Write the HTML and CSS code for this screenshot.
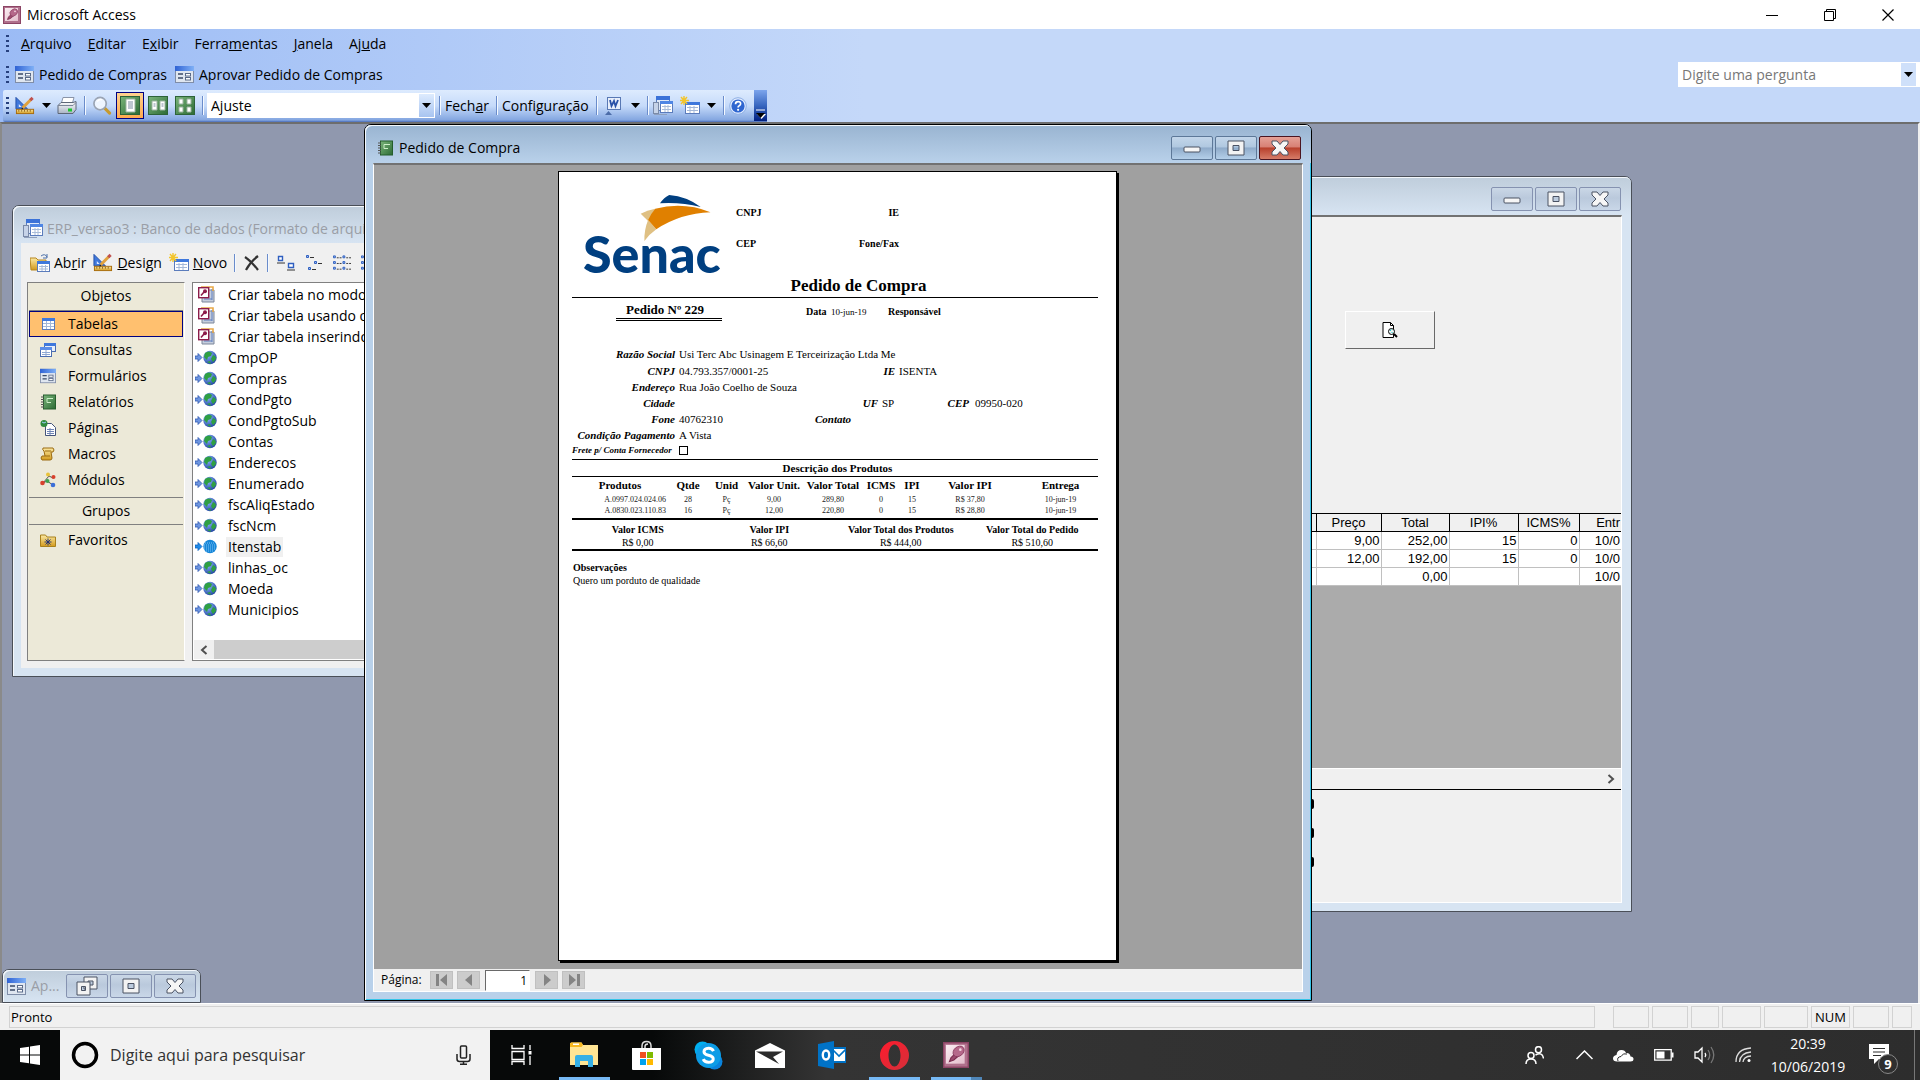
FILE: index.html
```html
<!DOCTYPE html>
<html lang="pt-BR">
<head>
<meta charset="utf-8">
<title>Microsoft Access</title>
<link rel="stylesheet" href="styles.css">
</head>
<body>
<svg class="defs" aria-hidden="true">
  <defs>
    <linearGradient id="gBlue" x1="0" y1="0" x2="1" y2="0"><stop offset="0" stop-color="#2f62d4"/><stop offset="1" stop-color="#7fb0f6"/></linearGradient>
    <linearGradient id="gGreen" x1="0" y1="0" x2="1" y2="1"><stop offset="0" stop-color="#7ab57a"/><stop offset="1" stop-color="#2c6a34"/></linearGradient>
    <linearGradient id="gGold" x1="0" y1="0" x2="0" y2="1"><stop offset="0" stop-color="#fbe9a4"/><stop offset="1" stop-color="#d39a1c"/></linearGradient>
    <linearGradient id="gGrey" x1="0" y1="0" x2="0" y2="1"><stop offset="0" stop-color="#fff"/><stop offset="1" stop-color="#a9b3c4"/></linearGradient>
    <linearGradient id="gOpera" x1="0" y1="0" x2="1" y2="1"><stop offset="0" stop-color="#ff1b2d"/><stop offset="1" stop-color="#d3303a"/></linearGradient>
    <radialGradient id="gGlobe" cx=".35" cy=".3" r=".8"><stop offset="0" stop-color="#8fb8ff"/><stop offset="1" stop-color="#1c3f9c"/></radialGradient>
    <linearGradient id="gKey" x1="0" y1="0" x2="1" y2="1"><stop offset="0" stop-color="#fbeef3"/><stop offset="1" stop-color="#e3bccb"/></linearGradient>
  </defs>
  <symbol id="access" viewBox="0 0 18 18"><rect x=".5" y=".5" width="17" height="17" fill="#b0708c" stroke="#8c4465"/><rect x="2" y="2" width="13" height="13" fill="url(#gKey)"/><path d="M4.500 13.500l1-2.500 4-4 2 2-4 3.500z" fill="#9c4a6e" stroke="#7c2c50" stroke-width=".8"/><ellipse cx="10.800" cy="6.500" rx="4.200" ry="3.200" fill="#b5688a" stroke="#8a3a60" stroke-width=".6" transform="rotate(-40 10.800 6.500)"/><circle cx="12" cy="5.300" r=".9" fill="#f3d6e1"/></symbol>
  <symbol id="form" viewBox="0 0 19 17"><rect x=".5" y=".5" width="18" height="16" fill="#dfe6f0" stroke="#7f8da8"/><rect x="0" y="0" width="19" height="5" fill="url(#gBlue)"/><path d="M3 8h5M3 12h5" stroke="#3b4a66" stroke-width="1.500"/><rect x="10.500" y="7.500" width="5" height="2.500" fill="#fff" stroke="#5a6a88"/><rect x="10.500" y="11.500" width="5" height="2.500" fill="#fff" stroke="#5a6a88"/></symbol>
  <symbol id="design" viewBox="0 0 21 19"><path d="M1 1v12h12z" fill="#3f78dc" stroke="#2250a8"/><path d="M4 8v3h3z" fill="#dce9ff"/><rect x="1.500" y="13.500" width="18" height="4.500" fill="url(#gGold)" stroke="#a86c0c"/><path d="M4 14v2M7 14v2M10 14v2M13 14v2M16 14v2" stroke="#7c4d05" stroke-width=".8"/><path d="M8 12l9-9" stroke="#e0a23e" stroke-width="3"/><path d="M16 4l2.500-2.500" stroke="#c0504d" stroke-width="3.200"/><path d="M7 13l1.500-.5" stroke="#222" stroke-width="1.500"/></symbol>
  <symbol id="printer" viewBox="0 0 20 18"><path d="M6 1h11l-2 7H4z" fill="#fff" stroke="#8a94a8"/><path d="M1 9l3-3h12l3-1v8l-3 4H1z" fill="url(#gGrey)" stroke="#5d6778"/><path d="M1 9h15l3-3" stroke="#7c8698" fill="none"/><rect x="11" y="12" width="4" height="3" fill="#1ec531"/></symbol>
  <symbol id="lens" viewBox="0 0 20 20"><path d="M12 12l6 6" stroke="#c79a2e" stroke-width="3.200" stroke-linecap="round"/><circle cx="8" cy="8" r="6.500" fill="#eef5ff" stroke="#9aa4b4" stroke-width="1.800"/><path d="M5 6q2-3 5-2" stroke="#fff" stroke-width="1.500" fill="none"/></symbol>
  <symbol id="page1" viewBox="0 0 20 19"><rect x=".5" y=".5" width="19" height="18" fill="url(#gGreen)" stroke="#2d6338"/><path d="M6 3h9v13H6z" fill="#fff" stroke="#9bb3a0"/><path d="M8 6h5M8 8h5M8 10h5M8 12h5" stroke="#7b8b9f"/></symbol>
  <symbol id="page2" viewBox="0 0 20 19"><rect x=".5" y=".5" width="19" height="18" fill="url(#gGreen)" stroke="#2d6338"/><path d="M4 5h5v9H4zM12 5h5v9h-5z" fill="#fff" stroke="#9bb3a0"/><path d="M5.500 8h2M5.500 10h2M13.500 8h2M13.500 10h2" stroke="#7b8b9f"/></symbol>
  <symbol id="page4" viewBox="0 0 20 19"><rect x=".5" y=".5" width="19" height="18" fill="url(#gGreen)" stroke="#2d6338"/><path d="M4 3h4v5H4zM12 3h4v5h-4zM4 11h4v5H4zM12 11h4v5h-4z" fill="#fff" stroke="#9bb3a0"/></symbol>
  <symbol id="down" viewBox="0 0 9 5"><path d="M0 0h9L4.500 5z" fill="#000"/></symbol>
  <symbol id="word" viewBox="0 0 16 18"><rect x="2.500" y=".5" width="13" height="12" fill="#e8effb" stroke="#5878b4"/><path d="M5 3l1.500 6L9 4l1.500 5L13 3" fill="none" stroke="#2a52a8" stroke-width="1.800"/><path d="M0 18l3.500-4L7 18z" fill="#4c6ca8"/></symbol>
  <symbol id="dbwin" viewBox="0 0 20 19"><path d="M1 7h5v11h8v1H1z" fill="#8fa0bd"/><rect x="3.500" y=".5" width="13" height="14" fill="#dde8f8" stroke="#5b7cbc"/><rect x="3" y="0" width="14" height="4" fill="#3b72d8"/><rect x=".5" y="6.500" width="5" height="11" fill="#c6d3e8" stroke="#7a8aa8"/><rect x="7.500" y="5.500" width="12" height="11" fill="#fff" stroke="#5b7cbc"/><rect x="7" y="5" width="13" height="3" fill="#4f86e4"/><path d="M9 10.500h9M9 13.500h9M12 9v7M15 9v7" stroke="#aabdd9"/></symbol>
  <symbol id="newobj" viewBox="0 0 20 19"><rect x="5.500" y="6.500" width="14" height="11" fill="#fff" stroke="#5b7cbc"/><rect x="5" y="6" width="15" height="3" fill="#3f78dc"/><path d="M7 11.500h11M7 14.500h11M10 10v7M14 10v7" stroke="#a4b8d8"/><path d="M4 0v9M0 4.500h9M1 1l6 7M7 1L1 8" stroke="#f3c52c" stroke-width="1.400"/></symbol>
  <symbol id="help" viewBox="0 0 18 18"><circle cx="9" cy="9" r="8.300" fill="#dfeaff" stroke="#8fb0e4"/><circle cx="9" cy="9" r="6.600" fill="#2f66d0"/><path d="M6.500 7.200q0-2.600 2.600-2.600t2.500 2.200q0 1.300-1.400 2-1.100.5-1.100 1.600" fill="none" stroke="#fff" stroke-width="1.700"/><circle cx="9.100" cy="12.800" r="1.100" fill="#fff"/></symbol>
  <symbol id="book" viewBox="0 0 16 16"><rect x="3.500" y="1" width="12" height="14" fill="url(#gGreen)" stroke="#255e2c"/><path d="M1 3h3M1 5.500h3M1 8h3M1 10.500h3M1 13h3" stroke="#555"/><path d="M7 4.500h6M7 4.500v4h4" fill="none" stroke="#cdf0c9"/></symbol>
  <symbol id="folder" viewBox="0 0 20 19"><path d="M0 5h6l2 2h8v10H1z" fill="url(#gGold)" stroke="#b8871f"/><path d="M11 3q4-3 6 1M17 1v4h-4" fill="none" stroke="#4a6ea8"/><rect x="7.500" y="8.500" width="12" height="10" fill="#fff" stroke="#5b7cbc"/><rect x="7" y="8" width="13" height="3" fill="#3f78dc"/><path d="M9 13.500h9M9 16h9M12 12v6M15.500 12v6" stroke="#a4b8d8"/></symbol>
  <symbol id="del" viewBox="0 0 16 16"><path d="M1 2q6 4 13 13M14 1Q6 7 2 15" stroke="#333" stroke-width="2.200" fill="none"/></symbol>
  <symbol id="large" viewBox="0 0 18 16"><path d="M1.500 1.500h4v4h-4zM11.500 8.500h5v4h-5z" fill="#fff" stroke="#2f5fc0" stroke-width="1.400"/><path d="M0 8h8M10 15h8" stroke="#333"/></symbol>
  <symbol id="small" viewBox="0 0 18 16"><path d="M1.500 .5h2v2h-2zM9.500 6.500h2v2h-2zM3.500 12.500h2v2h-2z" fill="#9bbcf0" stroke="#2f5fc0"/><path d="M5 2.500h4M13 8.500h4M7 14.500h4" stroke="#333"/></symbol>
  <symbol id="details" viewBox="0 0 19 16"><path d="M.5 .5h2v2h-2zM10.500 .5h2v2h-2zM.5 6.500h2v2h-2zM10.500 6.500h2v2h-2zM.5 12.500h2v2h-2zM10.500 12.500h2v2h-2z" fill="#9bbcf0" stroke="#2f5fc0"/><path d="M4 2.500h5M14 2.500h5M4 8.500h5M14 8.500h5M4 14.500h5M14 14.500h5" stroke="#333" stroke-dasharray="2 1"/></symbol>
  <symbol id="table" viewBox="0 0 16 16"><rect x="2.500" y="2.500" width="12" height="11" fill="#fff" stroke="#5b7cbc"/><rect x="2" y="2" width="13" height="3" fill="#3f78dc"/><path d="M3 7.500h11M3 10.500h11M6.500 5v8M10.500 5v8" stroke="#a4b8d8"/></symbol>
  <symbol id="query" viewBox="0 0 16 16"><rect x="4.500" y="1.500" width="11" height="8" fill="#e8effb" stroke="#4a6cb0"/><rect x="4" y="1" width="12" height="3" fill="#3f78dc"/><rect x=".5" y="5.500" width="11" height="9" fill="#fff" stroke="#4a6cb0"/><rect x="0" y="5" width="12" height="3" fill="#5a8de8"/><path d="M2 10.500h8M2 12.500h8M6 8v6" stroke="#8ea8d4"/></symbol>
  <symbol id="pages" viewBox="0 0 16 16"><path d="M5.500 3.500h6l4 4v8h-10z" fill="#fff" stroke="#44547a"/><path d="M7 9.500h7M7 11.500h7M7 13.500h7M10 8v7" stroke="#6f84b4"/><circle cx="4" cy="3.500" r="3.500" fill="#2f8a3e"/><path d="M2 2q2 2 4 0" stroke="#9fd0ff" fill="none"/></symbol>
  <symbol id="macro" viewBox="0 0 16 16"><path d="M3 2h10q2 2 0 4h-2l1 6q0 2-2 2H2q-2-2 0-4h3L4 5Q2 4 3 2z" fill="url(#gGold)" stroke="#9a6a10"/><path d="M5 5h6M5 10h5" stroke="#9a6a10"/></symbol>
  <symbol id="module" viewBox="0 0 16 16"><path d="M3 11l6-7M3 11l4-2 6 4M9 4l4 2" stroke="#555" fill="none"/><circle cx="8" cy="2.500" r="2" fill="#e8c23a"/><circle cx="13.500" cy="5" r="2" fill="#d8402c"/><circle cx="2.500" cy="11" r="2.300" fill="#d8402c"/><circle cx="7.500" cy="9" r="2" fill="#3da24c"/><circle cx="13" cy="13" r="2.300" fill="#3c6fd8"/></symbol>
  <symbol id="fav" viewBox="0 0 16 14"><path d="M.5 2h5l1.500 2h8.500v9.500H.5z" fill="url(#gGold)" stroke="#a8801c"/><path d="M8 5.500v7M4.500 9h7M5.500 6.500l5 5M10.500 6.500l-5 5" stroke="#1c2c74" stroke-width=".9"/></symbol>
  <symbol id="wizard" viewBox="0 0 17 17"><path d="M4 4h12v12H4z" fill="#c5cedd" stroke="#7c879a"/><path d="M6 13h8M14 3v11" stroke="#5f7fc0" fill="none"/><path d="M3 1h12v4" stroke="#e8a848" stroke-width="1.600" fill="none"/><rect x=".7" y="1.700" width="10" height="10" fill="#fff" stroke="#8c1c4a" stroke-width="1.400"/><path d="M3 9.500l3-3.500" stroke="#8c1c4a" stroke-width="1.600"/><circle cx="7" cy="5.300" r="2" fill="#8c1c4a"/></symbol>
  <symbol id="globe" viewBox="0 0 22 15"><path d="M0 6h3V3.500L7 7.500 3 11.500V9H0z" fill="#6d95e0" stroke="#3058b0" stroke-width=".8"/><circle cx="15" cy="7.500" r="6.700" fill="url(#gGlobe)"/><path d="M10 3q4-3 7 0l-1 3-3 1-1 3-3-3zM18 5q3 1 3 4l-3 3-2-3zM12 12l3-1 1 3z" fill="#2fa043"/></symbol>
  <symbol id="globesel" viewBox="0 0 22 15"><path d="M0 6h3V3.500L7 7.500 3 11.500V9H0z" fill="#1f8be8" stroke="#0d62c0" stroke-width=".8"/><circle cx="15" cy="7.500" r="6.700" fill="#1686d8"/><path d="M10 4h10M9 6h12M9 8h12M9 10h12M11 12h8" stroke="#7cc2f4" stroke-dasharray="1 1"/></symbol>
  <symbol id="wmin" viewBox="0 0 18 16"><rect x="1" y="7" width="16" height="5" rx="1" fill="#f6f6f6" stroke="#4a5263"/></symbol>
  <symbol id="wmax" viewBox="0 0 18 16"><path fill-rule="evenodd" d="M1 1h16v14H1zM6 5.500h6v5H6z" fill="#f3f3f3" stroke="#4a5263" stroke-linejoin="round"/></symbol>
  <symbol id="wres" viewBox="0 0 22 20"><path fill-rule="evenodd" d="M8 1h13v12H8zM12 5h5v4h-5z" fill="#f3f3f3" stroke="#4a5263"/><path fill-rule="evenodd" d="M1 6h13v13H1zM5.500 10.500h4v4h-4z" fill="#f3f3f3" stroke="#4a5263"/></symbol>
  <symbol id="wclose" viewBox="0 0 18 16"><path d="M1 1h5l3 3.500L12 1h5v3l-4 4 4 4v3h-5L9 11.500 6 15H1v-3l4-4-4-4z" fill="#f6f6f6" stroke="#4a5263" stroke-linejoin="round"/></symbol>
</svg>

<header class="titlebar">
  <svg class="i18"><use href="#access"/></svg>
  <h1 class="app-name">Microsoft Access</h1>
  <div class="caption">
    <button class="cap-btn" aria-label="Minimizar"><svg width="12" height="12"><path d="M0 6.500h12" stroke="#000"/></svg></button>
    <button class="cap-btn" aria-label="Restaurar"><svg width="12" height="12" fill="none" stroke="#000"><path d="M.5 2.500h9v9h-9zM2.500 2.500v-2h9v9h-2"/></svg></button>
    <button class="cap-btn" aria-label="Fechar"><svg width="12" height="12"><path d="M.5 .5l11 11M11.500 .5l-11 11" stroke="#000" stroke-width="1.200"/></svg></button>
  </div>
</header>

<div class="bars">
  <nav class="menu bar">
    <span class="grip"></span>
    <button class="menu-item"><u>A</u>rquivo</button><button class="menu-item"><u>E</u>ditar</button><button class="menu-item">E<u>x</u>ibir</button><button class="menu-item">Ferra<u>m</u>entas</button><button class="menu-item"><u>J</u>anela</button><button class="menu-item">Aj<u>u</u>da</button>
  </nav>
  <div class="bar second">
    <span class="grip"></span>
    <button class="link-btn"><svg class="i19"><use href="#form"/></svg>Pedido de Compras</button>
    <button class="link-btn"><svg class="i19"><use href="#form"/></svg>Aprovar Pedido de Compras</button>
    <div class="ask"><input type="text" value="Digite uma pergunta" aria-label="Digite uma pergunta"><button aria-label="Abrir lista"><svg class="arr"><use href="#down"/></svg></button></div>
  </div>
  <div class="bar tools">
    <span class="grip"></span>
    <button class="tool" aria-label="Design"><svg class="i20"><use href="#design"/></svg></button>
    <button class="tool drop" aria-label="Opções de design"><svg class="arr"><use href="#down"/></svg></button>
    <button class="tool" aria-label="Imprimir"><svg class="i20"><use href="#printer"/></svg></button>
    <span class="sep"></span>
    <button class="tool" aria-label="Zoom"><svg class="i20"><use href="#lens"/></svg></button>
    <button class="tool on" aria-label="Uma página"><svg class="i20"><use href="#page1"/></svg></button>
    <button class="tool wide" aria-label="Duas páginas"><svg class="i20"><use href="#page2"/></svg></button>
    <button class="tool wide" aria-label="Várias páginas"><svg class="i20"><use href="#page4"/></svg></button>
    <span class="sep"></span>
    <div class="combo"><select aria-label="Zoom"><option>Ajuste</option></select><span class="combo-arrow"><svg class="arr"><use href="#down"/></svg></span></div>
    <span class="sep tight"></span>
    <button class="tool label">Fech<u>a</u>r</button>
    <span class="sep"></span>
    <button class="tool label">Confi<u>g</u>uração</button>
    <span class="sep"></span>
    <button class="tool" aria-label="Vínculos do Office"><svg class="i18"><use href="#word"/></svg></button>
    <button class="tool drop far" aria-label="Opções de vínculo"><svg class="arr"><use href="#down"/></svg></button>
    <span class="sep"></span>
    <button class="tool label" aria-label="Janela de banco de dados"><svg class="i20"><use href="#dbwin"/></svg></button>
    <button class="tool wide" aria-label="Novo objeto"><svg class="i20"><use href="#newobj"/></svg></button>
    <button class="tool drop" aria-label="Opções de novo objeto"><svg class="arr"><use href="#down"/></svg></button>
    <span class="sep"></span>
    <button class="tool label" aria-label="Ajuda"><svg class="i18"><use href="#help"/></svg></button>
    <button class="overflow" aria-label="Opções da barra"><svg width="11" height="11"><path d="M1 1h9" stroke="#fff" stroke-width="1"/><path d="M2 5h9L6.500 10z" fill="#fff"/><path d="M1 4h9L5.500 9z" fill="#000"/></svg></button>
  </div>
</div>

<main class="mdi">
  <section class="win db">
    <header class="win-title"><svg class="i20"><use href="#dbwin"/></svg><h2>ERP_versao3 : Banco de dados (Formato de arquivo do Access 2000)</h2></header>
    <div class="db-body">
      <div class="db-tools">
        <button><svg class="i20"><use href="#folder"/></svg><span>Ab<u>r</u>ir</span></button>
        <button><svg class="i20"><use href="#design"/></svg><span><u>D</u>esign</span></button>
        <button><svg class="i20"><use href="#newobj"/></svg><span><u>N</u>ovo</span></button>
        <span class="sep"></span>
        <button aria-label="Excluir"><svg class="i16"><use href="#del"/></svg></button>
        <span class="sep"></span>
        <button class="view" aria-label="Ícones grandes"><svg class="i18"><use href="#large"/></svg></button>
        <button class="view" aria-label="Ícones pequenos"><svg class="i18"><use href="#small"/></svg></button>
        <button class="view" aria-label="Lista"><svg class="i18"><use href="#details"/></svg></button>
        <button class="view" aria-label="Detalhes"><svg class="i18"><use href="#details"/></svg></button>
      </div>
      <div class="db-panes">
        <nav class="objects">
          <h3>Objetos</h3>
          <button class="obj sel"><svg class="i16"><use href="#table"/></svg>Tabelas</button>
          <button class="obj"><svg class="i16"><use href="#query"/></svg>Consultas</button>
          <button class="obj"><svg class="i16"><use href="#form"/></svg>Formulários</button>
          <button class="obj"><svg class="i16"><use href="#book"/></svg>Relatórios</button>
          <button class="obj"><svg class="i16"><use href="#pages"/></svg>Páginas</button>
          <button class="obj"><svg class="i16"><use href="#macro"/></svg>Macros</button>
          <button class="obj"><svg class="i16"><use href="#module"/></svg>Módulos</button>
          <h3 class="groups">Grupos</h3>
          <button class="obj"><svg class="i16"><use href="#fav"/></svg>Favoritos</button>
        </nav>
        <div class="list">
          <ul>
            <li><svg class="wiz"><use href="#wizard"/></svg><span>Criar tabela no modo Design</span></li>
            <li><svg class="wiz"><use href="#wizard"/></svg><span>Criar tabela usando o assistente</span></li>
            <li><svg class="wiz"><use href="#wizard"/></svg><span>Criar tabela inserindo dados</span></li>
            <li><svg class="glb"><use href="#globe"/></svg><span>CmpOP</span></li>
            <li><svg class="glb"><use href="#globe"/></svg><span>Compras</span></li>
            <li><svg class="glb"><use href="#globe"/></svg><span>CondPgto</span></li>
            <li><svg class="glb"><use href="#globe"/></svg><span>CondPgtoSub</span></li>
            <li><svg class="glb"><use href="#globe"/></svg><span>Contas</span></li>
            <li><svg class="glb"><use href="#globe"/></svg><span>Enderecos</span></li>
            <li><svg class="glb"><use href="#globe"/></svg><span>Enumerado</span></li>
            <li><svg class="glb"><use href="#globe"/></svg><span>fscAliqEstado</span></li>
            <li><svg class="glb"><use href="#globe"/></svg><span>fscNcm</span></li>
            <li class="picked"><svg class="glb"><use href="#globesel"/></svg><span>Itenstab</span></li>
            <li><svg class="glb"><use href="#globe"/></svg><span>linhas_oc</span></li>
            <li><svg class="glb"><use href="#globe"/></svg><span>Moeda</span></li>
            <li><svg class="glb"><use href="#globe"/></svg><span>Municipios</span></li>
          </ul>
          <div class="hscroll"><button aria-label="Rolar para a esquerda"><svg width="8" height="10"><path d="M6.500 1L2 5l4.500 4" fill="none" stroke="#505050" stroke-width="2"/></svg></button><span class="thumb"></span></div>
        </div>
      </div>
    </div>
  </section>

  <section class="win order">
    <header class="win-title">
      <div class="win-btns"><button aria-label="Minimizar"><svg class="g"><use href="#wmin"/></svg></button><button aria-label="Maximizar"><svg class="g"><use href="#wmax"/></svg></button><button aria-label="Fechar"><svg class="g"><use href="#wclose"/></svg></button></div>
    </header>
    <div class="win-body">
      <div class="order-form"><button class="preview" aria-label="Visualizar impressão"><svg width="16" height="16"><path d="M1 .5h7.500l3 3V15.500H1z" fill="#fff" stroke="#000"/><path d="M8.500 .5v3h3" fill="none" stroke="#000"/><circle cx="9.500" cy="9.500" r="3" fill="#e8f4f4" stroke="#000"/><path d="M8 9l1.500-1.500M9.500 11l1-1" stroke="#2cc"/><path d="M12 12l3 3" stroke="#000" stroke-width="2"/></svg></button></div>
      <div class="sheet">
        <table>
          <colgroup><col><col class="c65"><col class="c68"><col class="c69"><col class="c61"><col class="c42"></colgroup>
          <thead><tr><th></th><th>Preço</th><th>Total</th><th>IPI%</th><th>ICMS%</th><th class="last">Entr</th></tr></thead>
          <tbody>
            <tr><td></td><td>9,00</td><td>252,00</td><td>15</td><td>0</td><td class="last">10/0</td></tr>
            <tr><td></td><td>12,00</td><td>192,00</td><td>15</td><td>0</td><td class="last">10/0</td></tr>
            <tr><td></td><td></td><td>0,00</td><td></td><td></td><td class="last">10/0</td></tr>
          </tbody>
        </table>
      </div>
      <div class="sheet-scroll"><button aria-label="Rolar para a direita"><svg width="8" height="10"><path d="M1.500 1L6 5 1.500 9" fill="none" stroke="#505050" stroke-width="2"/></svg></button></div>
      <div class="marks"><i></i><i></i><i></i></div>
    </div>
  </section>

  <section class="win report">
    <header class="win-title"><svg class="i16"><use href="#book"/></svg><h2>Pedido de Compra</h2>
      <div class="win-btns"><button aria-label="Minimizar"><svg class="g"><use href="#wmin"/></svg></button><button aria-label="Maximizar"><svg class="g"><use href="#wmax"/></svg></button><button class="close" aria-label="Fechar"><svg class="g"><use href="#wclose"/></svg></button></div>
    </header>
    <div class="win-body">
      <div class="viewer">
        <article class="paper">
          <div class="letterhead">
            <svg class="logo" viewBox="0 0 138 80" role="img" aria-label="Senac">
              <path d="M75 8.300Q79 2.500 84.200 0 102 1.500 115.700 12 96 7 75 8.300z" fill="#003f80"/>
              <path d="M55.700 18.700Q62 15 70.200 13.700L63.100 26z" fill="#dfc083"/>
              <path d="M63.100 25L71.300 34.300Q64 39.500 59.400 46 59 35 63.100 25z" fill="#dfc083"/>
              <path d="M70.200 13.700Q99 6.500 125.500 17.300 95 18.500 71.300 34.300L63.100 25Q66 18.500 70.200 13.700z" fill="#e08000"/>
              <text x="-2" y="78" class="wordmark">Senac</text>
            </svg>
            <div class="lh-fields"><b>CNPJ</b><b class="r">IE</b><b>CEP</b><b class="r">Fone/Fax</b></div>
          </div>
          <h2 class="doc-title">Pedido de Compra</h2>
          <div class="doc-head"><div class="doc-no">Pedido Nº 229</div><b class="dt">Data</b><span class="dv">10-jun-19</span><b>Responsável</b></div>
          <div class="details">
            <b class="k">Razão Social</b><span class="all">Usi Terc Abc Usinagem E Terceirização Ltda Me</span>
            <b class="k">CNPJ</b><span>04.793.357/0001-25</span><b class="ie">IE</b><span class="iev">ISENTA</span>
            <b class="k">Endereço</b><span class="all">Rua João Coelho de Souza</span>
            <b class="k">Cidade</b><span></span><b>UF</b><span>SP</span><b>CEP</b><span class="zip">09950-020</span>
            <b class="k">Fone</b><span class="phone">40762310<b>Contato</b></span>
            <b class="k">Condição Pagamento</b><span class="all">A Vista</span>
            <label for="frete">Frete p/ Conta Fornecedor</label><input type="checkbox" id="frete">
          </div>
          <h3 class="prod-title">Descrição dos Produtos</h3>
          <table class="prod">
            <colgroup><col class="p1"><col class="p2"><col class="p3"><col class="p4"><col class="p5"><col class="p6"><col class="p7"><col class="p8"><col></colgroup>
            <thead><tr><th>Produtos</th><th>Qtde</th><th>Unid</th><th>Valor Unit.</th><th>Valor Total</th><th>ICMS</th><th>IPI</th><th>Valor IPI</th><th>Entrega</th></tr></thead>
            <tbody>
              <tr><td>A.0997.024.024.06</td><td>28</td><td>Pç</td><td>9,00</td><td>289,80</td><td>0</td><td>15</td><td>R$ 37,80</td><td>10-jun-19</td></tr>
              <tr><td>A.0830.023.110.83</td><td>16</td><td>Pç</td><td>12,00</td><td>220,80</td><td>0</td><td>15</td><td>R$ 28,80</td><td>10-jun-19</td></tr>
            </tbody>
          </table>
          <dl class="totals">
            <div><dt>Valor ICMS</dt><dd>R$ 0,00</dd></div>
            <div><dt>Valor IPI</dt><dd>R$ 66,60</dd></div>
            <div><dt>Valor Total dos Produtos</dt><dd>R$ 444,00</dd></div>
            <div><dt>Valor Total do Pedido</dt><dd>R$ 510,60</dd></div>
          </dl>
          <div class="notes"><b>Observações</b><p>Quero um porduto de qualidade</p></div>
        </article>
      </div>
      <div class="pager">
        <label for="pg">Página:</label>
        <button aria-label="Primeira página"><svg width="12" height="12" fill="#848484"><path d="M0 0h3v12H0zM11 0v12L4 6z"/></svg></button>
        <button aria-label="Página anterior"><svg width="12" height="12" fill="#848484"><path d="M9 0v12L2 6z"/></svg></button>
        <input id="pg" type="text" value="1">
        <button aria-label="Próxima página"><svg width="12" height="12" fill="#848484"><path d="M3 0v12l7-6z"/></svg></button>
        <button aria-label="Última página"><svg width="12" height="12" fill="#848484"><path d="M9 0h3v12H9zM1 0v12l7-6z"/></svg></button>
      </div>
    </div>
  </section>

  <section class="win mini">
    <header class="win-title"><svg class="i19"><use href="#form"/></svg><h2>Ap...</h2>
      <div class="win-btns"><button aria-label="Restaurar"><svg class="g big"><use href="#wres"/></svg></button><button aria-label="Maximizar"><svg class="g"><use href="#wmax"/></svg></button><button aria-label="Fechar"><svg class="g"><use href="#wclose"/></svg></button></div>
    </header>
  </section>
</main>

<div class="status">
  <span class="pane msg">Pronto</span>
  <span class="pane w36 first"></span><span class="pane w36"></span><span class="pane w28"></span><span class="pane w38"></span><span class="pane w44"></span><span class="pane w38">NUM</span><span class="pane w36"></span><span class="pane w20"></span>
</div>

<footer class="taskbar">
  <button class="start" aria-label="Iniciar"><svg width="20" height="20" fill="#fff"><path d="M0 3l9-1.300V9.500H0zM10 1.500L20 0v9.500H10zM0 10.500h9v7.800L0 17zM10 10.500h10V20l-10-1.500z"/></svg></button>
  <div class="search">
    <svg width="28" height="28"><circle cx="14" cy="14" r="11.500" fill="none" stroke="#000" stroke-width="3.500"/></svg>
    <input type="text" value="Digite aqui para pesquisar" aria-label="Pesquisar">
    <svg width="15" height="20" fill="none" stroke="#222" stroke-width="1.500"><rect x="4.500" y="1" width="6" height="12" rx="1"/><path d="M1 9v5q0 2.500 2.500 2.500h8q2.500 0 2.500-2.500V9M7.500 16.500v3M4 19.200h7"/></svg>
  </div>
  <nav class="apps">
    <button aria-label="Visão de tarefas"><svg width="22" height="20" fill="none" stroke="#fff" stroke-width="1.300"><path d="M1 0v3.500h12V0M1 6.500h12v8H1zM1 20v-3.500h12V20M19 0v5M19 11v9"/><path d="M17.500 6h3v3.500h-3z" fill="#fff" stroke="none"/></svg></button>
    <button class="run" aria-label="Explorador"><svg width="28" height="26"><path d="M0 2q0-1.500 1.500-1.500h10L13 3h15v20H0z" fill="#ffe594"/><path d="M0 2q0-1.500 1.500-1.500h10L13 3l-1.500 2H0z" fill="#f6b820"/><path d="M3 1.500h6v1.500H3z" fill="#fff"/><path d="M5 25V15q0-2 2-2h14q2 0 2 2v10h-5v-6h-8v6z" fill="#36b0e6"/></svg></button>
    <button aria-label="Loja"><svg width="29" height="30"><path d="M10 9V6q0-4.500 4.500-4.500T19 6v3M13 9V6.500Q13 4 16 4" fill="none" stroke="#ddd" stroke-width="1.500"/><path d="M0 8h29v21q0 1-1 1H1q-1 0-1-1z" fill="#fff"/><path d="M8 12h6v6H8z" fill="#f05022"/><path d="M15 12h6v6h-6z" fill="#7fba00"/><path d="M8 19h6v6H8z" fill="#00a2ee"/><path d="M15 19h6v6h-6z" fill="#ffb900"/></svg></button>
    <button aria-label="Skype"><svg width="29" height="29"><circle cx="8.500" cy="8.500" r="8" fill="#00aff0"/><circle cx="20.500" cy="20.500" r="8" fill="#0a83dc"/><circle cx="14.500" cy="14.500" r="12.500" fill="#0c9ce6"/><path d="M19.500 10.200Q18 7.200 14.500 7.300 10 7.500 10 10.800q0 2.500 4.500 3.500 4.700 1 4.700 3.600 0 3.200-4.700 3.300-4 0-5.300-3" fill="none" stroke="#fff" stroke-width="3"/></svg></button>
    <button aria-label="Email"><svg width="30" height="25"><path d="M0 7.500L15 0l15 7.500V25H0z" fill="#fff"/><path d="M1 8.500h27L18 14l6 7z" fill="#2b2b2b"/></svg></button>
    <button aria-label="Outlook"><svg width="28" height="28"><path d="M13 6h15v16H13z" fill="#0072c6"/><path d="M15 8h12v12H15z" fill="#fff"/><path d="M15 9l6 6 6.500-6.500" fill="none" stroke="#0072c6" stroke-width="1.600"/><path d="M0 3l16-3v28L0 25z" fill="#0072c6"/><ellipse cx="8" cy="14" rx="3.200" ry="4.500" fill="none" stroke="#fff" stroke-width="2.400"/></svg></button>
    <button class="run" aria-label="Opera"><svg width="29" height="29"><path fill-rule="evenodd" d="M14.500 0a14.500 14.500 0 1 0 0 29 14.500 14.500 0 0 0 0-29zm0 3.500c3.500 0 6 5 6 11s-2.500 11-6 11-6-5-6-11 2.500-11 6-11z" fill="url(#gOpera)"/></svg></button>
    <button class="run multi" aria-label="Access"><svg width="26" height="26"><use href="#access"/></svg></button>
  </nav>
  <div class="tray">
    <svg width="19" height="19" fill="none" stroke="#fff" stroke-width="1.500"><circle cx="6" cy="9.500" r="3"/><circle cx="13.500" cy="3.700" r="3"/><path d="M1 18q0-5 5-5t5 5M10.500 9q7-3.500 8 3.500"/></svg>
    <svg width="17" height="10"><path d="M.5 9l8-8 8 8" fill="none" stroke="#fff" stroke-width="1.500"/></svg>
    <svg width="21" height="13"><path d="M4 12.500q-4 0-4-3t3.500-3.500Q4 1 8.500 1q3.500 0 4.500 3 4-.5 4.500 3.500 3 .2 3 2.500 0 2.500-3 2.500z" fill="#fff"/><path d="M5 12q-1.500-4 3-4.500Q10 3.500 14 5" fill="none" stroke="#2d2d2d"/></svg>
    <svg width="20" height="12"><path d="M.7 .7h16.500v10.500H.7z" fill="none" stroke="#fff" stroke-width="1.300"/><path d="M17.500 3.500h2v5h-2z" fill="#fff"/><path d="M2.500 2.500h8v7h-8z" fill="#fff"/></svg>
    <svg width="21" height="18" fill="none" stroke="#fff" stroke-width="1.300"><path d="M1 6h3l4-4v14l-4-4H1zM11 7q1.500 2 0 4"/><path d="M14 4q3.500 5 0 10M17 1q5.500 8 0 16" stroke="#777"/></svg>
    <svg width="17" height="16" fill="none" stroke="#ddd" stroke-width="1.300"><path d="M1 15Q1 2 16 1M4.500 15Q5 6 16 5M8 15Q8.500 9.500 16 9"/><circle cx="14" cy="13.500" r="1.500" fill="#fff" stroke="none"/></svg>
    <time class="clock">20:39<br>10/06/2019</time>
    <div class="notif"><svg width="20" height="20"><path d="M0 0h20v15H10l-5 5v-5H0z" fill="#fff"/><path d="M4 4.500h12M4 8h12M4 11.500h8" stroke="#2d2d2d" stroke-width="1.200"/></svg><span class="badge">9</span></div>
    <span class="peek"></span>
  </div>
</footer>
</body>
</html>
```
FILE: styles.css
```css
* { box-sizing: border-box; }
body {
  margin: 0;
  min-height: 100vh;
  display: flex;
  flex-direction: column;
  overflow: hidden;
  font: 14px/20px "Open Sans", "Noto Sans", sans-serif;
  color: #000;
  background: #f0f0f0;
}
button, input, select { font: inherit; color: inherit; border: 0; margin: 0; padding: 0; background: none; border-radius: 0; }
button { display: flex; align-items: center; justify-content: center; white-space: nowrap; }
h1, h2, h3, p, ul, dl, dd { margin: 0; padding: 0; font: inherit; }
svg { display: block; flex: none; }
.defs { position: absolute; width: 0; height: 0; }
.i16 { width: 16px; height: 16px; }
.i18 { width: 18px; height: 18px; }
.i19 { width: 19px; height: 17px; }
.i20 { width: 20px; height: 19px; }
.arr { width: 9px; height: 5px; }

/* application title */
.titlebar { height: 29px; flex: none; display: flex; align-items: center; gap: 6px; padding-left: 3px; background: #fff; }
.caption { margin-left: auto; display: flex; padding-right: 3px; }
.cap-btn { width: 58px; height: 29px; }

/* menus and toolbars */
.bars { flex: none; background: linear-gradient(90deg, #9bbbf5, #c4d8f9 45%, #c4d8f9); }
.bar { display: flex; align-items: center; height: 31px; padding-left: 6px; }
.menu { height: 30px; }
.grip { width: 3px; height: 18px; flex: none; background: repeating-linear-gradient(90deg, transparent 0 0, transparent 0 0), repeating-linear-gradient(#27417f 0 2px, transparent 2px 5px); }
.menu-item { margin-left: 16px; }
.menu .grip + .menu-item { margin-left: 12px; }
.link-btn { gap: 5px; margin-left: 6px; }
.link-btn + .link-btn { margin-left: 8px; }
.ask { margin-left: auto; display: flex; width: 242px; height: 25px; padding: 1px; background: #fff; }
.ask input { flex: 1; min-width: 0; padding-left: 3px; color: #777; }
.ask button { width: 15px; margin-right: 3px; background: #cfe0fa; }
.tools { width: max-content; height: 32px; margin-left: 3px; padding: 0 0 1px 3px; border-radius: 2px 0 0 2px; background: linear-gradient(#ddebfe, #c5dafa 50%, #83a6e0 94%, #4a6cb8); }
.tool { height: 27px; margin-left: 6px; }
.tool.label { margin-left: 4px; }
.tool.drop { margin-left: 7px; }
.tool.drop.far { margin-left: 9px; }
.tool.on { width: 28px; margin-left: 4px; border: 1px solid #000080; background: linear-gradient(#ffd28f, #ffa94e); }
.tool.on + .tool { margin-left: 4px; }
.tool.wide { margin-left: 7px; }
.sep { width: 2px; height: 19px; margin-left: 7px; flex: none; background: linear-gradient(90deg, #6a8ccb 50%, #f4f9ff 50%); }
.sep.tight { margin-left: 4px; }
.combo { position: relative; margin-left: 3px; }
.combo select { display: block; appearance: none; width: 228px; height: 25px; padding-left: 3px; background: #fff; border: 1px solid #fff; }
.combo-arrow { position: absolute; top: 1px; right: 1px; width: 15px; height: 23px; display: grid; place-items: center; background: linear-gradient(#ddebfe, #a8c4f0); pointer-events: none; }
.overflow { width: 13px; height: 31px; margin-left: 7px; align-items: flex-end; padding-bottom: 1px; background: linear-gradient(#7da5ec, #3867c0 50%, #001f80); }

/* workspace */
.mdi { position: relative; flex: 1; overflow: hidden; background: #9098ae; border: solid; border-width: 2px 2px 0; border-color: #6d6d6d #f0f0f0 #fff #8a8a8a; }
.win { position: absolute; display: flex; flex-direction: column; padding: 0 8px 8px; border: 1px solid #4a4f58; border-radius: 7px 7px 0 0; background: #d7e4f2; box-shadow: inset 1px 1px #f4f8fc; }
.win-title { display: flex; align-items: center; gap: 7px; height: 37px; flex: none; margin: 0 -8px; padding: 8px 10px 0; border-radius: 6px 6px 0 0; background: linear-gradient(#bfcddb, #d7e4f2); box-shadow: inset 1px 1px #f4f8fc; color: #9a9ea6; white-space: nowrap; overflow: hidden; }
.win-btns { display: flex; gap: 2px; margin-left: auto; }
.win-btns button { width: 42px; height: 24px; border: 1px solid #8592b0; border-radius: 2px; background: linear-gradient(#cad7e6, #bac9dc 45%, #c9d7e8); }
.g { width: 18px; height: 16px; }
.g.big { width: 22px; height: 20px; }
.win-body { flex: 1; min-height: 0; display: flex; flex-direction: column; background: #f0f0f0; border: 1px solid #fff; border-top: 2px solid #727272; }

.db { left: 10px; top: 81px; width: 620px; height: 472px; }
.db .win-title { gap: 4px; }
.db-body { flex: 1; display: flex; flex-direction: column; background: #f0f0f0; padding: 0 6px 7px; }
.db-tools { display: flex; align-items: center; height: 39px; padding-left: 3px; }
.db-tools button { gap: 4px; margin-right: 7px; }
.db-tools .sep { height: 18px; margin: 0 8px 0 0; }
.db-tools .view { margin-right: 10px; }
.db-panes { flex: 1; display: flex; gap: 7px; min-height: 0; }
.objects { width: 158px; padding: 0 1px; border: 1px solid #808080; border-right-color: #fff; background: #ece9d8; }
.objects h3 { height: 28px; line-height: 26px; text-align: center; border-bottom: 1px solid #808080; }
.obj { width: 100%; height: 26px; justify-content: flex-start; gap: 12px; padding-left: 11px; }
.obj.sel { padding-left: 10px; border: 1px solid #000080; background: #ffc06f; }
.objects .groups { margin: 4px 0 2px; border-top: 1px solid #808080; }
.list { flex: 1; min-width: 0; display: flex; flex-direction: column; border: 1px solid #808080; background: #fff; padding: 1px; }
.list ul { flex: 1; list-style: none; }
.list li { display: flex; align-items: center; height: 21px; }
.list span { padding: 0 2px; white-space: nowrap; }
.wiz { width: 17px; height: 17px; margin: 0 11px 0 4px; }
.glb { width: 22px; height: 15px; margin: 0 9px 0 1px; }
.list .picked span { background: #f0f0f0; }
.hscroll { display: flex; height: 19px; background: #f0f0f0; }
.hscroll button { width: 20px; }
.hscroll .thumb { flex: 1; background: #cdcdcd; }

.order { left: 798px; top: 52px; width: 832px; height: 736px; padding-right: 9px; }
.order .win-title { height: 38px; margin-right: -9px; padding-top: 6px; }
.order-form { height: 296px; flex: none; padding: 94px 186px 0 0; display: flex; justify-content: flex-end; }
.preview { width: 90px; height: 38px; border: 1px solid #fff; border-right-color: #696969; border-bottom-color: #696969; }
.sheet { height: 255px; flex: none; overflow: hidden; background: #ababab; }
.sheet table { width: 100%; table-layout: fixed; border-collapse: collapse; font: 13px/17px "Liberation Sans", Arial, sans-serif; background: #fff; }
.sheet th { height: 18px; padding: 0; font-weight: 400; background: #f0f0f0; border: 1px solid #000; }
.sheet td { height: 18px; padding: 0 1px 0 0; text-align: right; border: 1px solid #c0c0c0; }
.sheet .last { text-align: right; padding-right: 1px; border-right: 0; }
.c65 { width: 65px; } .c68 { width: 68px; } .c69 { width: 69px; } .c61 { width: 61px; } .c42 { width: 42px; }
.sheet-scroll { height: 22px; flex: none; display: flex; justify-content: flex-end; border-top: 1px solid #fff; border-bottom: 1px solid #000; }
.sheet-scroll button { width: 20px; }
.marks { display: flex; flex-direction: column; gap: 19px; padding: 9px 0 0 496px; }
.marks i { width: 8px; height: 10px; border-radius: 2px; background: #000; }

.report { left: 362px; top: 0; width: 948px; height: 877px; padding: 0 8px 8px; border-color: #000; background: #b9d1ea; box-shadow: inset 1px 1px #fff, inset -1px -1px #35c4e8; }
.report .win-title { height: 38px; padding: 7px 10px 0 12px; gap: 6px; color: #000; background: linear-gradient(#99b4d1, #b9d1ea); }
.report .win-btns button { border-color: #5d7898; background: linear-gradient(#c3d6ea, #b0c8e0 45%, #8fabca 50%, #b4cfe9); }
.report .win-btns .close { border-color: #4b1520; background: linear-gradient(#e5a197, #d88074 45%, #b8402c 50%, #d67c68); }
.viewer { flex: 1; min-height: 0; padding: 6px 0 0 184px; background: #a0a0a0; }
.pager { display: flex; align-items: center; height: 22px; padding-left: 7px; font-size: 12px; }
.pager label { width: 49px; }
.pager button { width: 23px; height: 18px; margin-right: 4px; background: #ccc; border: 1px solid #c0c0c0; }
.pager input { width: 45px; height: 21px; margin: 0 5px 0 1px; padding-right: 2px; text-align: right; background: #fff; border: 1px solid #696969; border-right-color: #fff; border-bottom-color: #fff; }

/* printed report */
.paper { width: 559px; height: 790px; padding: 23px 18px 0 13px; background: #fff; border: 1px solid #000; box-shadow: 2px 2px #000; font: 11px/14px "Liberation Serif", "Times New Roman", serif; }
.letterhead { display: flex; height: 81px; padding-left: 13px; font-size: 10px; }
.logo { width: 138px; height: 80px; overflow: visible; }
.wordmark { font: 900 52px Lato, sans-serif; fill: #003f80; }
.lh-fields { display: grid; grid-template: 31px 31px / 50px 113px; padding: 11px 0 0 13px; }
.r { text-align: right; }
.doc-title { height: 22px; padding-left: 47px; font-size: 17px; font-weight: 700; line-height: 19px; text-align: center; border-bottom: 1px solid #000; }
.doc-head { display: flex; height: 46px; padding: 3px 0 0 44px; font-size: 10px; line-height: 22px; }
.doc-no { width: 106px; height: 20px; padding-left: 10px; font-size: 13px; font-weight: 700; line-height: 17px; border-bottom: 3px double #000; }
.dt { width: 25px; margin-left: 84px; }
.dv { width: 57px; font-size: 9px; }
.details { display: grid; grid-template-columns: 103px 168px 27px 13px 70px 1fr; grid-template-rows: 17px 17px 16px 16px 16px 16px 14px; column-gap: 4px; align-items: center; height: 116px; padding-top: 1px; border-bottom: 1px solid #000; white-space: nowrap; }
.details b { text-align: right; font-style: italic; }
.details .k { grid-column: 1; }
.details .all { grid-column: 2 / -1; }
.details .phone { grid-column: 2 / 4; display: flex; justify-content: space-between; padding-right: 27px; }
.details .ie { grid-column: 4; }
.details .iev { grid-column: 5 / -1; }
.details label { grid-column: 1; font-size: 9px; font-weight: 700; font-style: italic; }
.details input { appearance: none; width: 9px; height: 9px; border: 1px solid #000; }
.details .zip { padding-left: 2px; }
.prod-title { height: 17px; line-height: 16px; font-weight: 700; text-align: center; padding-left: 5px; border-bottom: 1px solid #000; }
.prod { width: 100%; table-layout: fixed; border-collapse: collapse; border-bottom: 2px solid #000; font-size: 8px; line-height: 11px; text-align: center; }
.prod th { padding: 0; font-size: 11px; line-height: 17px; white-space: nowrap; }
.prod td { padding: 0; color: #222; white-space: nowrap; }
.prod tbody tr:last-child td { padding-bottom: 2px; }
.prod td:first-child { text-align: right; padding-right: 2px; }
.prod th:last-child, .prod td:last-child { padding-left: 8px; }
.p1 { width: 96px; } .p2 { width: 40px; } .p3 { width: 37px; } .p4 { width: 58px; } .p5 { width: 60px; } .p6 { width: 36px; } .p7 { width: 26px; } .p8 { width: 90px; }
.totals { display: grid; grid-template-columns: repeat(4, 1fr); padding-top: 3px; border-bottom: 2px solid #000; font-size: 10px; line-height: 13px; text-align: center; }
.totals dt { font-weight: 700; }
.notes { padding: 10px 1px; font-size: 10px; line-height: 13px; }

.mini { left: 0; bottom: 0; width: 199px; height: 34px; padding: 0; }
.mini .win-title { height: 32px; margin: 0; padding: 0 4px; gap: 5px; }

/* status bar */
.status { flex: none; display: flex; gap: 3px; height: 27px; padding: 2px 8px 2px 9px; background: #f0f0f0; border-top: 1px solid #fff; font-size: 13px; line-height: 20px; }
.pane { border: 1px solid #d2d2d2; text-align: center; }
.msg { flex: 1; padding-left: 1px; text-align: left; }
.first { margin-left: 15px; }
.w20 { width: 20px; } .w28 { width: 28px; } .w36 { width: 36px; } .w38 { width: 39px; } .w44 { width: 44px; }

/* taskbar */
.taskbar { flex: none; display: flex; height: 50px; color: #fff; background: linear-gradient(90deg, #070909 0 34%, #343434 43%, #2d2d2d); }
.start { width: 60px; }
.search { width: 430px; display: flex; align-items: center; gap: 11px; padding: 0 19px 0 11px; background: #f2f2f2; color: #333; font-size: 16px; }
.search input { flex: 1; min-width: 0; }
.apps { display: flex; gap: 2px; padding-left: 2px; }
.apps button { width: 60px; height: 50px; position: relative; }
.run::after { content: ""; position: absolute; left: 5px; bottom: 0; width: 51px; height: 3px; background: #76b9f5; }
.multi::after { background: linear-gradient(90deg, #76b9f5 40px, #4f86b8 40px); }
.tray { margin-left: auto; display: flex; align-items: center; }
.tray > svg { margin-right: 20px; }
.tray > svg:first-child { margin-right: 32px; }
.tray > svg:last-of-type { margin-right: 16px; }
.clock { width: 80px; text-align: center; line-height: 23px; }
.notif { position: relative; margin-left: 21px; padding-bottom: 2px; }
.badge { position: absolute; left: 9px; top: 10px; width: 20px; height: 20px; border: 1px solid #888; border-radius: 50%; background: #2f2f2f; font-size: 13px; font-weight: 700; line-height: 18px; text-align: center; }
.peek { width: 6px; height: 50px; margin-left: 25px; border-left: 1px solid #777; }
```
